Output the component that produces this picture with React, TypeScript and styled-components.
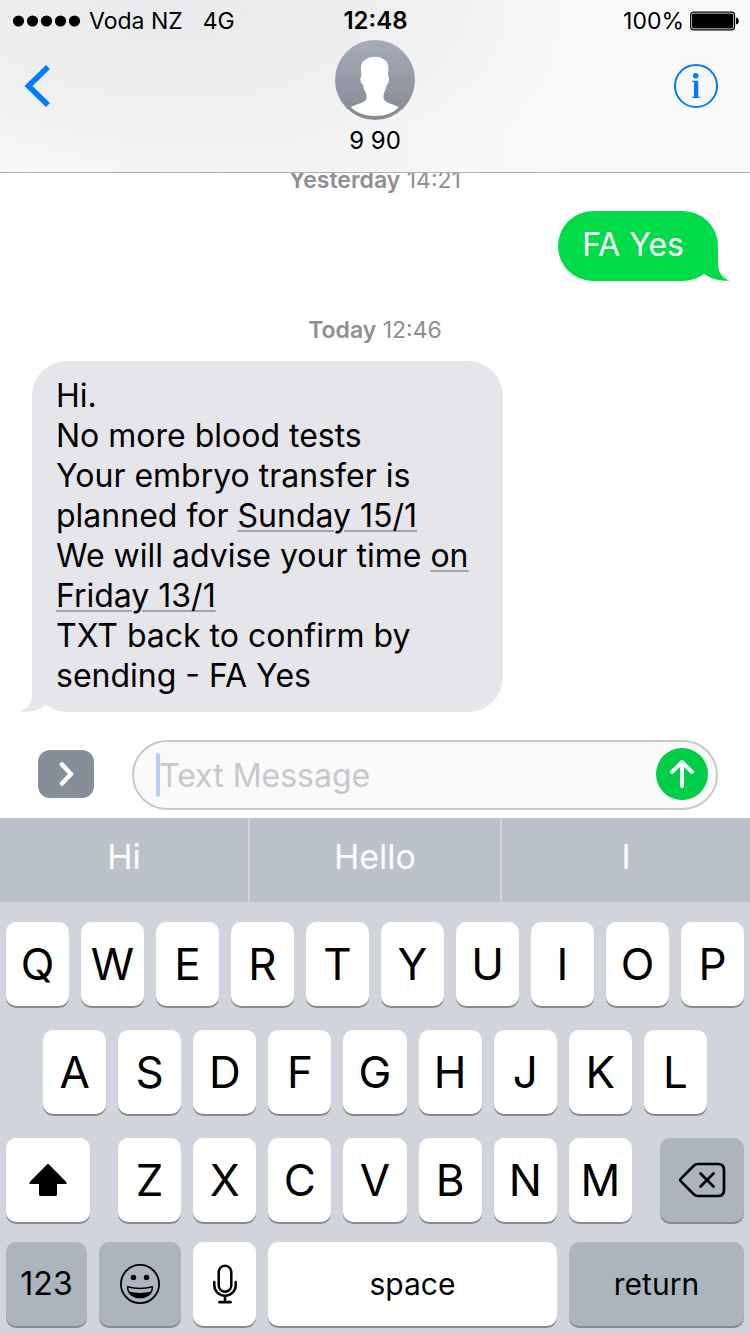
import React from 'react';
import styled, { createGlobalStyle, css } from 'styled-components';

const GlobalStyle = createGlobalStyle`
  * { box-sizing: border-box; }
  body {
    margin: 0;
    background: #fff;
    color: #000;
    font-family: Inter, "Liberation Sans", sans-serif;
  }
  button, input { font: inherit; color: inherit; }
  button {
    border: 0;
    margin: 0;
    padding: 0;
    background: none;
    cursor: pointer;
  }
  svg { display: block; }
`;

const Screen = styled.div`
  display: flex;
  flex-direction: column;
  height: 100vh;
`;

/* ---------- Header ---------- */

const Header = styled.header`
  flex: none;
  border-bottom: 1px solid #b2b2b2;
  background: radial-gradient(ellipse 440px 190px at 170px 10px, #ebebed 0%, #ededee 40%, rgba(245, 245, 246, 0.6) 80%, rgba(249, 249, 249, 0) 100%),
    linear-gradient(90deg, #f8f8f8 0%, #f2f2f3 35%, #f9f9f9 75%);
`;

const StatusBar = styled.div`
  display: grid;
  grid-template-columns: 1fr auto 1fr;
  align-items: center;
  height: 40px;
  padding: 2px 11px 0 12px;
  font-size: 24px;
  line-height: 38px;
`;

const StatusGroup = styled.div<{ $end?: boolean }>`
  display: flex;
  align-items: center;
  gap: ${(p) => (p.$end ? 6 : 8)}px;
  justify-content: ${(p) => (p.$end ? 'flex-end' : 'flex-start')};
  font-size: 23px;
`;

const Network = styled.span`
  margin-left: 12px;
`;

const Clock = styled.time`
  font-weight: 600;
`;

const NavBar = styled.nav`
  display: grid;
  grid-template-columns: 1fr auto 1fr;
  align-items: start;
  padding: 0 32px 15px 24px;
`;

const NavButton = styled.button<{ $end?: boolean }>`
  margin-top: 24px;
  justify-self: ${(p) => (p.$end ? 'end' : 'start')};
`;

const Contact = styled.div`
  display: flex;
  flex-direction: column;
  align-items: center;
  gap: 5px;
  padding-left: 8px;
  font-size: 24px;
  line-height: 32px;
`;

/* ---------- Conversation ---------- */

const Thread = styled.main`
  flex: 1;
  min-height: 0;
  overflow: hidden;
  display: flex;
  flex-direction: column;
  justify-content: flex-end;
  padding: 0 32px 20px;
`;

const Stamp = styled.p`
  flex: none;
  margin: 35px 0 17px;
  text-align: center;
  font-size: 23px;
  line-height: 28px;
  color: #8e8e93;
  b { font-weight: 600; }
`;

const Bubble = styled.div<{ $mine?: boolean }>`
  flex: none;
  position: relative;
  max-width: 471px;
  border-radius: 35px;
  font-size: 32px;
  line-height: 40px;
  white-space: pre-line;
  ${(p) =>
    p.$mine
      ? css`
          align-self: flex-end;
          padding: 14px 34px 16px 24px;
          background: #00dc48;
          color: #fff;
        `
      : css`
          align-self: flex-start;
          padding: 15px 28px 16px 24px;
          background: #e6e5ea;
        `}
`;

const Tail = styled.svg<{ $mine?: boolean }>`
  position: absolute;
  bottom: 0;
  ${(p) => (p.$mine ? 'right: -12px;' : 'left: -12px; transform: scaleX(-1);')}
`;

const DateLink = styled.a`
  color: inherit;
  text-decoration: underline;
  text-decoration-color: #a4a4a8;
  text-decoration-thickness: 2px;
  text-underline-offset: 3px;
`;

/* ---------- Composer ---------- */

const Composer = styled.form`
  flex: none;
  display: flex;
  align-items: center;
  gap: 38px;
  padding: 8px 32px 8px 38px;
`;

const AppsButton = styled.button`
  flex: none;
  display: grid;
  place-items: center;
  width: 56px;
  height: 48px;
  margin-bottom: 2px;
  border-radius: 12px;
  background: #868e99;
`;

const Field = styled.div`
  position: relative;
  flex: 1;
  min-width: 0;
  display: flex;
  align-items: center;
  height: 70px;
  padding: 0 8px 2px 25px;
  border: 2px solid #c8c8cd;
  border-radius: 35px;
  background: #fafafa;
`;

const Caret = styled.span`
  position: absolute;
  left: 22px;
  top: 11px;
  width: 4px;
  height: 44px;
  border-radius: 2px;
  background: #bbcaf7;
`;

const TextInput = styled.input`
  flex: 1;
  min-width: 0;
  padding: 4px 0 0;
  border: 0;
  outline: 0;
  background: none;
  font-size: 32px;
  line-height: 40px;
  &::placeholder { color: #c7c7cc; opacity: 1; }
`;

const SendButton = styled.button`
  flex: none;
  display: grid;
  place-items: center;
  width: 52px;
  height: 52px;
  border-radius: 50%;
  background: #00ce46;
`;

/* ---------- Keyboard ---------- */

const Keyboard = styled.section`
  flex: none;
  background: #d1d4dc;
`;

const Suggestions = styled.div`
  display: grid;
  grid-template-columns: 248fr 250fr 248fr;
  gap: 2px;
`;

const Suggestion = styled.button`
  height: 84px;
  padding-bottom: 6px;
  background: #bbc2ca;
  color: #fff;
  font-size: 34px;
  line-height: 40px;
`;

const Keys = styled.div`
  display: flex;
  flex-direction: column;
  gap: 24px;
  padding: 20px 6px 8px;
`;

const KeyRow = styled.div<{ $columns: string; $inset?: number }>`
  display: grid;
  grid-template-columns: ${(p) => p.$columns};
  gap: 12px;
  padding: 0 ${(p) => p.$inset ?? 0}px;
  &:last-child { margin-top: -4px; }
`;

const LetterGroup = styled.div`
  display: grid;
  grid-template-columns: repeat(7, 1fr);
  gap: 12px;
  padding: 0 16px;
`;

const Key = styled.button<{ $dark?: boolean; $size?: number }>`
  display: grid;
  place-items: center;
  min-width: 0;
  height: 84px;
  border-radius: 10px;
  background: ${(p) => (p.$dark ? '#acb4be' : '#fff')};
  box-shadow: 0 2px 0 #898a8d;
  font-size: ${(p) => p.$size ?? 44}px;
  line-height: 48px;
`;

const Letters = ({ of }: { of: string }) => (
  <>
    {of.split('').map((letter) => (
      <Key key={letter} type="button">{letter}</Key>
    ))}
  </>
);

/* ---------- Icons ---------- */

const SignalDots = () => (
  <svg width="69" height="12" viewBox="0 0 69 12" role="img" aria-label="Full signal">
    {[6.5, 20.5, 34.5, 48.5, 62.5].map((x) => (
      <circle key={x} cx={x} cy="6" r="5.6" />
    ))}
  </svg>
);

const Battery = () => (
  <svg width="49" height="20" viewBox="0 0 49 20" role="img" aria-label="Battery full">
    <rect x="0.7" y="1.2" width="43.8" height="17.6" rx="3" fill="#fff" stroke="#000" strokeWidth="1.3" />
    <rect x="2" y="2.5" width="41.2" height="15" rx="1.8" />
    <path d="M46 6.8h1.2q1.6 1 1.6 3.2t-1.6 3.2H46z" />
  </svg>
);

const Avatar = () => (
  <svg width="80" height="80" viewBox="0 0 80 80" aria-hidden="true">
    <defs>
      <linearGradient id="avatar" x1="0" y1="0" x2="0" y2="1">
        <stop offset="0" stopColor="#a5abb8" />
        <stop offset="1" stopColor="#858994" />
      </linearGradient>
    </defs>
    <circle cx="40" cy="40" r="40" fill="url(#avatar)" />
    <path
      fill="#fff"
      d="M39.5 16.800c-4 0-7 1.200-9 3-3.500 1.800-4.500 4.500-4.500 9.200l.4 7.500c-1.200.5-1.200 2-.8 4 .4 2.500 1.200 4.200 2.600 4.500.3 3 1 6 2.800 7.500.5 3 .5 5 .3 6.500-1 3.500-9 5-15.500 8C21.500 73 30 76 40 76s18.500-3 24-9c-6.500-3-14.500-4.500-15.300-8-.3-1.500-.3-3.500.3-6.500 1.700-1.500 2.200-4.500 2.500-7.500 1.400-.3 2-2 2.400-4.500.4-2 .4-3.500-.8-4l.3-7.500c0-5.500-1.500-8-4.400-9.200-2-1.800-5.500-3-9.500-3z"
    />
  </svg>
);

const BackIcon = () => (
  <svg width="28" height="44" viewBox="0 0 28 44" aria-hidden="true">
    <path d="M24 3L4.500 22 24 41" fill="none" stroke="#007aff" strokeWidth="5.6" />
  </svg>
);

const InfoIcon = () => (
  <svg width="44" height="44" viewBox="0 0 44 44" aria-hidden="true" fill="#007aff">
    <circle cx="22" cy="22" r="21" fill="none" stroke="#007aff" strokeWidth="2" />
    <circle cx="21.7" cy="11.7" r="2.8" />
    <path d="M18 16.700h6.300v16.100H26V34h-8v-1.200h2V18h-2z" />
  </svg>
);

const BubbleTail = ({ mine }: { mine?: boolean }) => (
  <Tail $mine={mine} width="40" height="36" viewBox="0 0 40 36" aria-hidden="true">
    <path d="M28 2v17c0 8 4 14 11.500 16.600C31 36.500 21 34 14.500 29L8 22 20 2z" fill={mine ? '#00dc48' : '#e6e5ea'} />
  </Tail>
);

const ChevronIcon = () => (
  <svg width="20" height="28" viewBox="0 0 20 28" aria-hidden="true">
    <path d="M6 4.500l9 9.500-9 9.500" fill="none" stroke="#fff" strokeWidth="4.6" strokeLinecap="round" strokeLinejoin="round" />
  </svg>
);

const SendIcon = () => (
  <svg width="28" height="32" viewBox="0 0 28 32" aria-hidden="true">
    <path d="M14 28V4M4 14L14 4l10 10" fill="none" stroke="#fff" strokeWidth="4" strokeLinecap="round" strokeLinejoin="round" />
  </svg>
);

const ShiftIcon = () => (
  <svg width="40" height="34" viewBox="0 0 40 34" aria-hidden="true">
    <path d="M19 1.400q1-1 2 0L38.300 19q1 2-.8 2H29v10.500q0 1.500-1.500 1.500h-15q-1.500 0-1.500-1.500V21H2.500q-1.800 0-.8-2z" />
  </svg>
);

const DeleteIcon = () => (
  <svg width="48" height="36" viewBox="0 0 48 36" fill="none" stroke="#000" strokeLinecap="round" strokeLinejoin="round" aria-hidden="true">
    <path d="M20 2h20q6 0 6 6v20q0 6-6 6H20q-2.500 0-4.500-2L3.200 19.600q-1.600-1.600 0-3.200L15.500 4Q17.500 2 20 2z" strokeWidth="2.7" />
    <path d="M22.500 11.500l13 13M35.500 11.500l-13 13" strokeWidth="2.7" />
  </svg>
);

const EmojiIcon = () => (
  <svg width="40" height="40" viewBox="0 0 40 40" aria-hidden="true">
    <circle cx="20" cy="20" r="19.1" fill="none" stroke="#000" strokeWidth="1.8" />
    <circle cx="13.5" cy="13.4" r="2.7" />
    <circle cx="26.5" cy="13.4" r="2.7" />
    <path d="M7.600 22.800q12.400 3.200 24.800 0c.2 6.500-5.200 10.700-12.400 10.700S7.400 29.300 7.600 22.800z" fill="none" stroke="#000" strokeWidth="1.5" strokeLinejoin="round" />
    <path d="M8.800 27.500q11.200 2.800 22.400 0C29.400 31.600 25 34 20 34S10.600 31.600 8.800 27.500z" />
  </svg>
);

const MicIcon = () => (
  <svg width="26" height="40" viewBox="0 0 26 40" fill="none" stroke="#000" strokeWidth="2.5" strokeLinecap="round" aria-hidden="true">
    <rect x="6.7" y="1.8" width="12.6" height="26" rx="6.3" />
    <path d="M2.300 18v3.200a10.700 10.500 0 0 0 21.400 0V18M13 32v5.500" />
    <path d="M7.500 38.200h11" strokeWidth="2.8" />
  </svg>
);

/* ---------- Screen ---------- */

export default function App() {
  return (
    <Screen>
      <GlobalStyle />
      <Header>
        <StatusBar>
          <StatusGroup>
            <SignalDots />
            <span>Voda NZ</span>
            <Network>4G</Network>
          </StatusGroup>
          <Clock>12:48</Clock>
          <StatusGroup $end>
            <span>100%</span>
            <Battery />
          </StatusGroup>
        </StatusBar>
        <NavBar>
          <NavButton type="button" aria-label="Back"><BackIcon /></NavButton>
          <Contact>
            <Avatar />
            <span>9 90</span>
          </Contact>
          <NavButton type="button" $end aria-label="Details"><InfoIcon /></NavButton>
        </NavBar>
      </Header>

      <Thread>
        <Stamp><b>Yesterday</b> 14:21</Stamp>
        <Bubble $mine>
          <BubbleTail mine />
          FA Yes
        </Bubble>
        <Stamp><b>Today</b> 12:46</Stamp>
        <Bubble>
          <BubbleTail />
          {'Hi.\nNo more blood tests\nYour embryo transfer is planned for '}
          <DateLink href="#sunday">Sunday 15/1</DateLink>
          {'\nWe will advise your time '}
          <DateLink href="#friday">on Friday 13/1</DateLink>
          {'\nTXT back to confirm by sending - FA Yes'}
        </Bubble>
      </Thread>

      <Composer onSubmit={(event) => event.preventDefault()}>
        <AppsButton type="button" aria-label="Show apps"><ChevronIcon /></AppsButton>
        <Field>
          <Caret />
          <TextInput type="text" placeholder="Text Message" aria-label="Text Message" />
          <SendButton type="submit" aria-label="Send"><SendIcon /></SendButton>
        </Field>
      </Composer>

      <Keyboard aria-label="Keyboard">
        <Suggestions>
          <Suggestion type="button">Hi</Suggestion>
          <Suggestion type="button">Hello</Suggestion>
          <Suggestion type="button">I</Suggestion>
        </Suggestions>
        <Keys>
          <KeyRow $columns="repeat(10, 1fr)"><Letters of="QWERTYUIOP" /></KeyRow>
          <KeyRow $columns="repeat(9, 1fr)" $inset={37}><Letters of="ASDFGHJKL" /></KeyRow>
          <KeyRow $columns="84fr 546fr 84fr">
            <Key type="button" aria-label="Shift"><ShiftIcon /></Key>
            <LetterGroup><Letters of="ZXCVBNM" /></LetterGroup>
            <Key type="button" $dark aria-label="Delete"><DeleteIcon /></Key>
          </KeyRow>
          <KeyRow $columns="81fr 82fr 63fr 289fr 175fr">
            <Key type="button" $dark $size={32}>123</Key>
            <Key type="button" $dark aria-label="Emoji"><EmojiIcon /></Key>
            <Key type="button" aria-label="Dictate"><MicIcon /></Key>
            <Key type="button" $size={30}>space</Key>
            <Key type="button" $dark $size={30}>return</Key>
          </KeyRow>
        </Keys>
      </Keyboard>
    </Screen>
  );
}
